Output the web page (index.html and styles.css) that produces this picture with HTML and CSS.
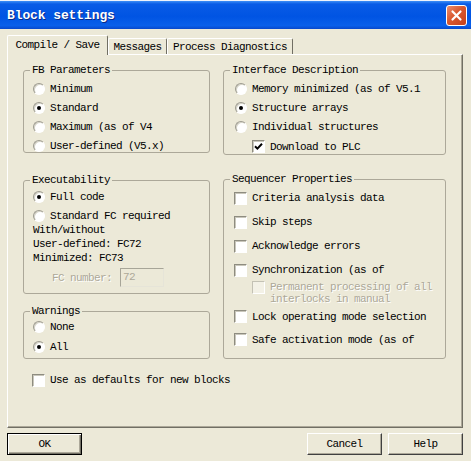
FILE: index.html
```html
<!DOCTYPE html>
<html>
<head>
<meta charset="utf-8">
<title>Block settings</title>
<link rel="stylesheet" href="styles.css">
</head>
<body>
<div class="window">
  <div class="titlebar">
    <span class="title">Block settings</span>
    <span class="close"><svg width="13" height="13" viewBox="0 0 13 13"><path d="M2.5 2.5 L10.5 10.5 M10.5 2.5 L2.5 10.5" stroke="#fff" stroke-width="2.2" stroke-linecap="round"/></svg></span>
  </div>
  <div class="content">
    <div class="tabs">
      <div class="tab active">Compile / Save</div>
      <div class="tab t-msg">Messages</div>
      <div class="tab t-proc">Process Diagnostics</div>
    </div>
    <div class="panel">
      <div class="col col-left">
        <div class="group g-fb">
          <span class="legend">FB Parameters</span>
          <div class="opt"><span class="radio"></span>Minimum</div>
          <div class="opt"><span class="radio on"></span>Standard</div>
          <div class="opt"><span class="radio"></span>Maximum (as of V4</div>
          <div class="opt"><span class="radio"></span>User-defined (V5.x)</div>
        </div>
        <div class="group g-exec">
          <span class="legend">Executability</span>
          <div class="opt"><span class="radio on"></span>Full code</div>
          <div class="opt"><span class="radio"></span>Standard FC required</div>
          <div class="notes">
            <div>With/without</div>
            <div>User-defined: FC72</div>
            <div>Minimized: FC73</div>
          </div>
          <div class="fcrow">
            <span class="disabled">FC number:</span>
            <span class="field">72</span>
          </div>
        </div>
        <div class="group g-warn">
          <span class="legend">Warnings</span>
          <div class="opt opt20"><span class="radio"></span>None</div>
          <div class="opt opt20"><span class="radio on"></span>All</div>
        </div>
        <div class="opt defaults"><span class="check"></span>Use as defaults for new blocks</div>
      </div>
      <div class="col col-right">
        <div class="group g-iface">
          <span class="legend">Interface Description</span>
          <div class="opt"><span class="radio"></span>Memory minimized (as of V5.1</div>
          <div class="opt"><span class="radio on"></span>Structure arrays</div>
          <div class="opt"><span class="radio"></span>Individual structures</div>
          <div class="opt plc"><span class="check"><svg width="9" height="9" viewBox="0 0 9 9"><path d="M1 4.2 L3.4 6.6 L8 1.8" fill="none" stroke="#000" stroke-width="2"/></svg></span>Download to PLC</div>
        </div>
        <div class="group g-seq">
          <span class="legend">Sequencer Properties</span>
          <div class="opt opt24"><span class="check"></span>Criteria analysis data</div>
          <div class="opt opt24"><span class="check"></span>Skip steps</div>
          <div class="opt opt24"><span class="check"></span>Acknowledge errors</div>
          <div class="opt opt24"><span class="check"></span>Synchronization (as of</div>
          <div class="sub">
            <span class="check dis"></span>
            <span class="disabled subtext">Permanent processing of all<br>interlocks in manual</span>
          </div>
          <div class="opt opt23"><span class="check"></span>Lock operating mode selection</div>
          <div class="opt opt23"><span class="check"></span>Safe activation mode (as of</div>
        </div>
      </div>
    </div>
    <div class="buttons">
      <button class="btn default">OK</button>
      <button class="btn cancel">Cancel</button>
      <button class="btn help">Help</button>
    </div>
  </div>
</div>
</body>
</html>
```
FILE: styles.css
```css
html, body {
  margin: 0;
  padding: 0;
}
body {
  width: 471px;
  height: 461px;
  overflow: hidden;
  background: #ECE9D8;
  font-family: "Liberation Mono", "DejaVu Sans Mono", monospace;
  font-size: 11px;
  letter-spacing: -0.6px;
  color: #000;
}
.titlebar {
  height: 28px;
  border-top: 1px solid #eef2fb;
  box-sizing: content-box;
  display: flex;
  align-items: center;
  justify-content: space-between;
  padding: 0 4px 0 7px;
  background: linear-gradient(180deg, #3d8ef6 0, #0a5ce6 3px, #0054e3 55%, #0a60ea 88%, #0848cb 100%);
}
.title {
  font-size: 13px;
  font-weight: bold;
  color: #fff;
  letter-spacing: -0.1px;
  text-shadow: 1px 1px 0 #0c2a86;
}
.close {
  width: 19px;
  height: 19px;
  border: 1px solid #fff;
  border-radius: 3px;
  background: linear-gradient(135deg, #ec8d6e 0%, #d9582f 45%, #c5401c 100%);
  display: flex;
  align-items: center;
  justify-content: center;
}
.content {
  padding: 6px 8px 0 7px;
}
.tabs {
  display: flex;
  align-items: flex-end;
  height: 19px;
}
.tab {
  box-sizing: border-box;
  height: 16px;
  display: flex;
  align-items: center;
  justify-content: center;
  border-top: 1px solid #fff;
  border-left: 1px solid #fff;
  border-right: 1px solid #716f64;
  border-radius: 2px 2px 0 0;
  background: #ECE9D8;
}
.tab.active {
  width: 101px;
  height: 20px;
  margin-bottom: -1px;
  position: relative;
  z-index: 1;
  padding-bottom: 1px;
}
.t-msg { width: 59px; }
.t-proc { width: 126px; }
.panel {
  box-sizing: border-box;
  width: 456px;
  height: 374px;
  border: 1px solid;
  border-color: #fff #716f64 #716f64 #fff;
  box-shadow: inset -1px -1px 0 #aca899;
  display: flex;
  gap: 13px;
  padding: 15px 0 0 15px;
}
.col {
  display: flex;
  flex-direction: column;
}
.col-left { width: 187px; }
.col-right { width: 223px; }
.group {
  position: relative;
  box-sizing: border-box;
  border: 1px solid #aca899;
  border-radius: 3px;
}
.legend {
  position: absolute;
  top: -7px;
  left: 6px;
  padding: 0 2px;
  line-height: 12px;
  background: #ECE9D8;
}
.opt {
  display: flex;
  align-items: center;
  gap: 5px;
  height: 19px;
  white-space: nowrap;
}
.opt20 { height: 20px; }
.opt24 { height: 24px; }
.opt23 { height: 23px; }
.radio {
  flex: none;
  position: relative;
  box-sizing: border-box;
  width: 12px;
  height: 12px;
  border-radius: 50%;
  background: #fff;
  border: 1px solid;
  border-color: #9c9a8e #fff #fff #9c9a8e;
  box-shadow: inset 1px 1px 0 #d6d4c8;
}
.radio.on::after {
  content: "";
  position: absolute;
  left: 3px;
  top: 3px;
  width: 4px;
  height: 4px;
  border-radius: 50%;
  background: #000;
}
.check {
  flex: none;
  box-sizing: border-box;
  width: 13px;
  height: 13px;
  background: #fff;
  border: 1px solid;
  border-color: #8e8c80 #fff #fff #8e8c80;
  box-shadow: inset 1px 1px 0 #c9c7bb;
  display: flex;
  align-items: center;
  justify-content: center;
}
.check.dis {
  background: #f3f1e6;
  border-color: #c3c1b4 #fff #fff #c3c1b4;
  box-shadow: none;
}
.disabled {
  color: #aca899;
  text-shadow: 1px 1px 0 #fff;
}
.g-fb {
  height: 83px;
  padding: 8px 0 0 9px;
}
.g-exec {
  margin-top: 27px;
  height: 114px;
  padding: 6px 0 0 9px;
}
.notes {
  margin-top: -2px;
  line-height: 14px;
}
.fcrow {
  margin-top: 3px;
  height: 19px;
  display: flex;
  align-items: center;
  gap: 8px;
  padding-left: 19px;
}
.field {
  box-sizing: border-box;
  width: 44px;
  height: 19px;
  border: 1px solid;
  border-color: #a7a598 #e6e4d8 #e6e4d8 #a7a598;
  color: #aca899;
  padding-left: 2px;
  line-height: 17px;
}
.g-warn {
  margin-top: 17px;
  height: 48px;
  padding: 5px 0 0 9px;
}
.defaults {
  margin-top: 11px;
  height: 20px;
  padding-left: 9px;
}
.g-iface {
  height: 85px;
  padding: 8px 0 0 11px;
}
.plc {
  height: 21px;
  padding-left: 17px;
}
.g-seq {
  margin-top: 24px;
  height: 180px;
  padding: 6px 0 0 10px;
}
.sub {
  display: flex;
  align-items: flex-start;
  gap: 5px;
  margin-top: -1px;
  height: 24px;
  padding-left: 18px;
  line-height: 12px;
  white-space: nowrap;
}
.buttons {
  display: flex;
  margin-top: 5px;
}
.btn {
  box-sizing: border-box;
  width: 75px;
  height: 22px;
  padding: 0;
  font: inherit;
  letter-spacing: inherit;
  color: #000;
  background: #ECE9D8;
  border: 1px solid;
  border-color: #fff #404040 #404040 #fff;
  box-shadow: inset -1px -1px 0 #aca899;
  border-radius: 0;
}
.btn.default {
  border-color: #000;
  box-shadow: inset 1px 1px 0 #fff, inset -1px -1px 0 #716f64, inset -2px -2px 0 #aca899;
}
.btn.cancel { margin-left: auto; }
.btn.help { margin-left: 6px; }
```
